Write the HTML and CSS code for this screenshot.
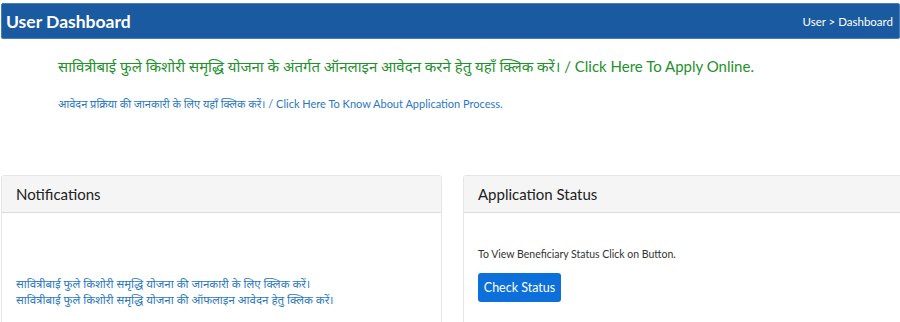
FILE: index.html
```html
<!DOCTYPE html>
<html lang="hi">
<head>
    <meta charset="UTF-8">
    <meta name="viewport" content="width=device-width, initial-scale=1.0">
    <title>User Dashboard</title>

    <link rel="stylesheet" href="styles.css">
</head>
<body>
    <div class="page-header">
        <h1 class="page-title">User Dashboard</h1>
        <div class="breadcrumb">User &gt; Dashboard</div>
    </div>

    <div class="apply-links">
        <a href="#" class="apply-online">सावित्रीबाई फुले किशोरी समृद्धि योजना के अंतर्गत ऑनलाइन आवेदन करने हेतु यहाँ क्लिक करें। / Click Here To Apply Online.</a>
        <a href="#" class="apply-process">आवेदन प्रक्रिया की जानकारी के लिए यहाँ क्लिक करें। / Click Here To Know About Application Process.</a>
    </div>

    <div class="card-row">
        <div class="card">
            <div class="card-header">Notifications</div>
            <div class="card-body notice-body">
                <a href="#" class="notice">सावित्रीबाई फुले किशोरी समृद्धि योजना की जानकारी के लिए क्लिक करें।</a>
                <a href="#" class="notice">सावित्रीबाई फुले किशोरी समृद्धि योजना की ऑफलाइन आवेदन हेतु क्लिक करें।</a>
            </div>
        </div>

        <div class="card status-card">
            <div class="card-header">Application Status</div>
            <div class="card-body status-body">
                <p class="status-text">To View Beneficiary Status Click on Button.</p>
                <button class="button">Check Status</button>
            </div>
        </div>
    </div>
</body>
</html>
```

FILE: styles.css
```css
body {
    font-family: Lato, "Noto Sans", "Noto Sans Devanagari", "Lohit Devanagari", sans-serif;
    margin: 0;
    padding: 3px 0 0 1px;
    background-color: #ffffff;
    overflow: hidden;
}

a {
    text-decoration: none;
}

.page-header {
    display: flex;
    justify-content: space-between;
    align-items: center;
    height: 34px;
    padding: 0 6px 0 4px;
    background-color: #1a5aa0;
    border: 1px solid #4a7db5;
    border-radius: 2px;
    color: #ffffff;
}

.page-title {
    margin: 0;
    font-size: 17.5px;
    font-weight: 700;
}

.breadcrumb {
    font-size: 11.5px;
}

.apply-links {
    display: flex;
    flex-direction: column;
    padding: 17px 0 0 57px;
    height: 119px;
}

.apply-online {
    font-size: 15px;
    color: #23912b;
}

.apply-process {
    margin-top: 20px;
    font-size: 11px;
    color: #2b78bf;
}

.card-row {
    display: flex;
    gap: 21px;
    width: 940px;
}

.card {
    width: 439px;
    flex-shrink: 0;
    border: 1px solid #e6e6e6;
    border-radius: 3px;
    background-color: #ffffff;
}

.card-header {
    height: 36px;
    line-height: 36px;
    padding: 0 14px;
    background-color: #f5f5f5;
    border-bottom: 1px solid #dcdcdc;
    font-size: 15px;
    color: #222222;
}

.notice-body {
    display: flex;
    flex-direction: column;
    padding: 63px 14px 20px;
}

.notice {
    font-size: 11.5px;
    line-height: 16px;
    color: #2b78bf;
}

.status-body {
    padding: 35px 14px 14px;
}

.status-text {
    margin: 0 0 13px;
    font-size: 10.5px;
    color: #333333;
}

.button {
    width: 83px;
    height: 29px;
    padding: 0;
    background-color: #0d6fd9;
    color: #ffffff;
    border: none;
    border-radius: 3px;
    font-family: Lato, sans-serif;
    font-size: 12.5px;
    cursor: pointer;
}
```
